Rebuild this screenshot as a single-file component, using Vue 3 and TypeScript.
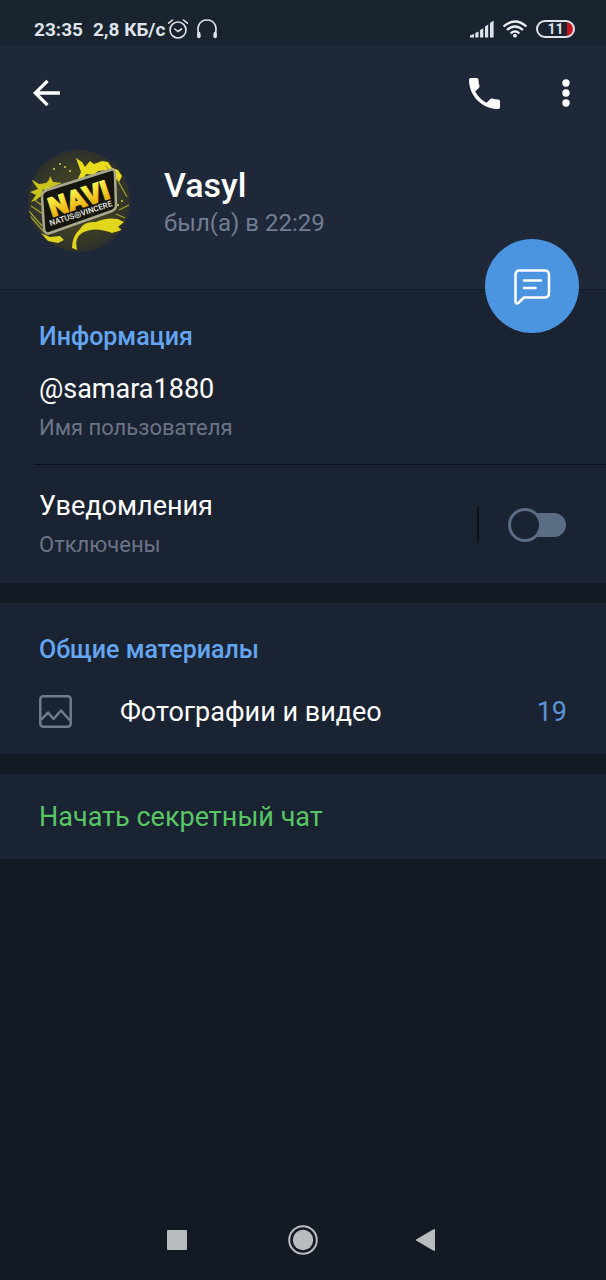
<script setup lang="ts">
import { ref } from 'vue'

interface Profile {
  name: string
  seen: string
  username: string
}

const profile: Profile = {
  name: 'Vasyl',
  seen: 'был(а) в 22:29',
  username: '@samara1880',
}

const notifications = ref(false)
const mediaCount = 19
</script>

<template>
  <div class="screen">
    <div class="status">
      <span class="time">23:35</span>
      <span class="speed">2,8 КБ/с</span>
      <svg class="alarm" width="22" height="22" viewBox="0 0 22 22" fill="none" stroke="#dfe3e9" stroke-width="1.6" stroke-linecap="round">
        <circle cx="11" cy="12" r="8" />
        <path d="M7.8 11 L11 13.6 L14.4 11" />
        <path d="M1.6 5.2 L5.6 2 M20.4 5.2 L16.4 2" />
      </svg>
      <svg class="phones" width="22" height="22" viewBox="0 0 22 22" fill="none" stroke="#dfe3e9">
        <path d="M4 19 C-0.5 10 3 2 11 2 C19 2 22.500 10 18 19" stroke-width="1.7" />
        <path d="M2.800 15.500 V18.500 M19.200 15.500 V18.500" stroke-width="3.400" stroke-linecap="round" />
      </svg>
      <span class="grow"></span>
      <svg width="24" height="18" viewBox="0 0 24 18" fill="#dfe3e9">
        <path d="M0 17.500 V15.500 L4 14 V17.500 Z M5.300 13 L8.500 11.500 V17.500 H5.300 Z M10.100 10 L13.300 8.300 V17.500 H10.100 Z M15 6.500 L18.200 4.500 V17.500 H15 Z M20 3 L23.600 0.500 V17.500 H20 Z" />
      </svg>
      <svg class="wifi" width="26" height="18" viewBox="0 0 26 18" fill="none" stroke="#eef1f5" stroke-width="2.300">
        <path d="M1.500 6.500 Q13 -3.500 24.500 6.500" />
        <path d="M5 10 Q13 3 21 10" />
        <path d="M8.600 13.300 Q13 9.500 17.400 13.300" />
        <circle cx="13" cy="15.700" r="1.900" fill="#eef1f5" stroke="none" />
      </svg>
      <span class="battery">11</span>
    </div>

    <header class="header">
      <div class="toolbar">
        <button class="icon" type="button" aria-label="Назад">
          <svg width="28" height="28" viewBox="0 0 28 28" fill="none" stroke="#fff" stroke-width="3.300">
            <path d="M27 14 H3 M14.500 1.800 L2.300 14 L14.500 26.200" />
          </svg>
        </button>
        <span class="grow"></span>
        <button class="icon" type="button" aria-label="Позвонить">
          <svg width="31" height="31" viewBox="3 3 18 18" fill="#fff">
            <path d="M6.620 10.790c1.440 2.830 3.760 5.140 6.590 6.590l2.200-2.200c.27-.27.67-.36 1.020-.24 1.120.37 2.330.57 3.570.57.550 0 1 .45 1 1V20c0 .55-.45 1-1 1-9.390 0-17-7.610-17-17 0-.55.45-1 1-1h3.500c.550 0 1 .45 1 1 0 1.250.2 2.450.57 3.570.110.35.030.74-.25 1.020l-2.200 2.200z" />
          </svg>
        </button>
        <button class="icon more" type="button" aria-label="Ещё">
          <svg width="8" height="28" viewBox="0 0 8 28" fill="#fff">
            <circle cx="4" cy="4" r="3.700" />
            <circle cx="4" cy="14" r="3.700" />
            <circle cx="4" cy="24" r="3.700" />
          </svg>
        </button>
      </div>
      <div class="person">
        <svg class="avatar" width="102" height="102" viewBox="0 0 102 102">
          <defs>
            <clipPath id="disc"><circle cx="51" cy="51" r="51" /></clipPath>
            <linearGradient id="gold" x1="0" y1="0" x2="0" y2="1">
              <stop offset="0.200" stop-color="#fdf04a" />
              <stop offset="0.900" stop-color="#e6a200" />
            </linearGradient>
            <radialGradient id="dark">
              <stop offset="0" stop-color="#4c4b24" />
              <stop offset="0.700" stop-color="#3a3b26" />
              <stop offset="1" stop-color="#2c312c" />
            </radialGradient>
            <filter id="soft"><feGaussianBlur stdDeviation="0.7" /></filter>
          </defs>
          <g clip-path="url(#disc)">
            <rect width="102" height="102" fill="url(#dark)" />
            <g filter="url(#soft)">
              <path d="M48 8 L54 12 L57 17 L62 11 L66 14 L74 11 L80 12 L84 18 L90 20 L94 26 L91 32 L86 27 L80 20 L70 21 L66 25 L58 24 L55 30 L49 31 L53 22 Z" fill="#e9dc1c" />
              <path d="M3 29 L11 34 L18 33 L21 30 L22 26 L25 32 L34 33 L24 37 L18 42 L15 39 L13 46 L8 50 L3 52 L8 45 L2 42 L10 39 Z" fill="#c9c51d" />
              <path d="M52 79 Q56 71 68 72 Q78 67 90 69 L96 72 L90 77 L94 80 L84 83 Q66 76 54 83 Q46 88 49 100 L44 98 Q44 86 52 79 Z" fill="#e2d61b" />
              <path d="M13 83 L22 87 L32 86 L36 90 L30 93 L20 91 Z" fill="#ded31b" />
              <path d="M89 29 L99 47 M91 60 L101 55 M88 64 L97 68 M3 56 L15 64 M1 61 L14 76 M5 49 L15 56 M78 16 L86 28 M2 66 L16 82" stroke="#a5a128" stroke-width="1.200" />
              <path d="M25 19 h2 M36 17 h2 M41 21 h2 M31 14 h2 M93 51 h2 M89 55 h2" stroke="#d7d04a" stroke-width="1.600" />
            </g>
            <path d="M19 40 L82 20 Q87 18 87 24 L88 56 Q88 59 84 61 L22 83 Q17 85 16 79 L14 46 Q14 42 19 40 Z" fill="#14150f" stroke="#a9a88e" stroke-width="2.500" />
            <g transform="translate(20 78) rotate(-18)">
              <text class="logo" x="7" y="-9" fill="url(#gold)" stroke="url(#gold)">NAVI</text>
              <text class="motto" x="3" y="-1" fill="#d9d9cf">NATUS◎VINCERE</text>
            </g>
          </g>
        </svg>
        <div class="who">
          <h1>{{ profile.name }}</h1>
          <p>{{ profile.seen }}</p>
        </div>
      </div>
      <button class="fab" type="button" aria-label="Написать сообщение">
        <svg width="38" height="38" viewBox="0 0 38 38" fill="none" stroke="#fff" stroke-width="2.500" stroke-linecap="round" stroke-linejoin="round">
          <path d="M6.500 3.500 H31.500 Q36 3.500 36 8 V26 Q36 30.500 31.500 30.500 H11 L5.300 36 Q2.500 37.800 2.500 34 V8 Q2.500 3.500 6.500 3.500 Z" />
          <path d="M11 13.500 H28 M11 21 H22.500" />
        </svg>
      </button>
    </header>

    <main>
      <section class="card">
        <h2>Информация</h2>
        <div class="row">
          <div class="pair">
            <span class="main">{{ profile.username }}</span>
            <span class="sub">Имя пользователя</span>
          </div>
        </div>
        <div class="row notify">
          <label class="pair" for="notify">
            <span class="main">Уведомления</span>
            <span class="sub">Отключены</span>
          </label>
          <span class="bar"></span>
          <input id="notify" v-model="notifications" class="switch" type="checkbox" />
        </div>
      </section>

      <section class="card">
        <h2>Общие материалы</h2>
        <button class="media" type="button">
          <svg width="33" height="33" viewBox="0 0 33 33" fill="none" stroke="#727b8c" stroke-width="2.500" stroke-linejoin="round">
            <rect x="1.300" y="1.300" width="30.400" height="30.400" rx="3" />
            <path d="M2 25 L9 17.500 L14.500 24 L22 15.500 L31 25.500" />
          </svg>
          <span class="main">Фотографии и видео</span>
          <span class="count">{{ mediaCount }}</span>
        </button>
      </section>

      <section class="card">
        <button class="secret" type="button">Начать секретный чат</button>
      </section>
    </main>

    <nav class="nav">
      <button class="icon" type="button" aria-label="Недавние">
        <svg width="30" height="30" viewBox="0 0 30 30" fill="#b9bcbe"><rect x="4" y="5" width="20" height="20" rx="1" /></svg>
      </button>
      <button class="icon" type="button" aria-label="Домой">
        <svg width="30" height="30" viewBox="0 0 30 30" fill="#b9bcbe">
          <circle cx="15" cy="15" r="10.200" />
          <circle cx="15" cy="15" r="13.800" fill="none" stroke="#b9bcbe" stroke-width="2" />
        </svg>
      </button>
      <button class="icon" type="button" aria-label="Назад">
        <svg width="30" height="30" viewBox="0 0 30 30" fill="#b9bcbe" stroke="#b9bcbe" stroke-width="2" stroke-linejoin="round">
          <path d="M4 15 L21 5 V25 Z" />
        </svg>
      </button>
    </nav>
  </div>
</template>

<style>
body {
  margin: 0;
  background: #131a24;
}
</style>

<style scoped>
.screen {
  display: flex;
  flex-direction: column;
  min-height: 100vh;
  background: #131a24;
  color: #fff;
  font-family: Roboto, "Noto Sans", sans-serif;
}

button {
  margin: 0;
  padding: 0;
  border: 0;
  background: none;
  color: inherit;
  font: inherit;
  text-align: left;
  cursor: pointer;
}

h1,
h2,
p {
  margin: 0;
}

svg {
  display: block;
  flex: none;
}

.grow {
  flex: 1;
}

.status {
  display: flex;
  align-items: center;
  height: 34px;
  padding: 12px 31px 0 34px;
  background: #1a2330;
  color: #dfe3e9;
  font-size: 19px;
  font-weight: 700;
}

.speed {
  margin-left: 10px;
}

.alarm {
  margin-left: 2px;
}

.phones {
  margin-left: 7px;
}

.wifi {
  margin: 0 8px;
}

.battery {
  box-sizing: border-box;
  width: 39px;
  height: 18px;
  border: 2px solid #dfe3e9;
  border-radius: 9px;
  background: linear-gradient(to right, transparent 29px, #c8141e 29px);
  font-size: 14px;
  line-height: 14px;
  text-align: center;
}

.header {
  position: relative;
  background: #1e2839;
  border-bottom: 1px solid #141b27;
}

.toolbar {
  display: flex;
  align-items: center;
  height: 94px;
  padding: 0 36px 0 33px;
}

.more {
  margin-left: 62px;
}

.person {
  display: flex;
  gap: 34px;
  padding: 10px 28px 37px;
}

.who {
  padding-top: 16px;
}

h1 {
  font-size: 34px;
  font-weight: 500;
  line-height: 38px;
}

.who p {
  color: #727d91;
  font-size: 24px;
  line-height: 38px;
}

.logo {
  font-size: 27px;
  font-weight: 900;
  stroke-width: 1px;
}

.motto {
  font-size: 8px;
  font-weight: 700;
}

.fab {
  position: absolute;
  right: 27px;
  bottom: -44px;
  display: flex;
  align-items: center;
  justify-content: center;
  width: 94px;
  height: 94px;
  border-radius: 50%;
  background: #4b94e0;
}

.card {
  background: #1a2332;
}

.card + .card {
  margin-top: 20px;
}

h2 {
  padding: 31px 39px 0;
  color: #64a5f0;
  font-size: 25px;
  font-weight: 500;
  line-height: 32px;
}

.row {
  display: flex;
  align-items: center;
  margin-left: 34px;
  padding: 20px 40px 22px 5px;
}

.notify {
  padding-top: 25px;
  padding-bottom: 24px;
  border-top: 1px solid #0b101a;
}

.pair {
  display: flex;
  flex: 1;
  flex-direction: column;
  gap: 9px;
}

.main {
  font-size: 27px;
  line-height: 32px;
}

.sub {
  color: #6b7486;
  font-size: 22px;
  line-height: 28px;
}

.bar {
  width: 2px;
  height: 37px;
  margin-right: 29px;
  background: #0b101a;
}

.switch {
  position: relative;
  display: flex;
  align-items: center;
  width: 58px;
  height: 34px;
  margin: 0;
  appearance: none;
  cursor: pointer;
}

.switch::after {
  content: "";
  flex: 1;
  height: 24px;
  margin-left: -8px;
  border-radius: 0 12px 12px 0;
  background: #5a6d84;
}

.switch::before {
  content: "";
  position: relative;
  z-index: 1;
  box-sizing: border-box;
  width: 34px;
  height: 34px;
  border: 3px solid #5a6d84;
  border-radius: 50%;
  background: #1a2332;
}

.switch:checked {
  transform: rotate(180deg);
}

.media {
  display: flex;
  align-items: center;
  width: 100%;
  padding: 29px 39px 26px;
}

.media .main {
  flex: 1;
  margin-left: 48px;
}

.count {
  color: #5b93d6;
  font-size: 27px;
  line-height: 32px;
}

.secret {
  width: 100%;
  padding: 27px 39px 26px;
  color: #59c665;
  font-size: 27px;
  line-height: 32px;
}

.nav {
  display: flex;
  align-items: center;
  justify-content: center;
  gap: 95px;
  height: 80px;
  margin-top: auto;
}
</style>
